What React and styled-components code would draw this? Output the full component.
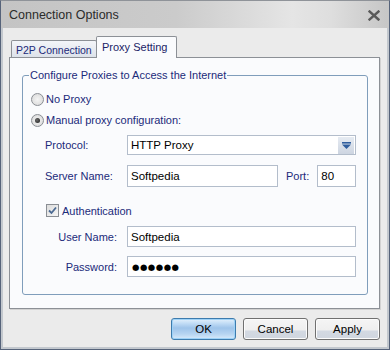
import React from 'react';
import styled, { createGlobalStyle } from 'styled-components';

const Global = createGlobalStyle`
  html, body { margin: 0; padding: 0; background: #ffffff; }
  body { font-family: "Liberation Sans", Arial, sans-serif; font-size: 11px; }
  #root { width: 390px; height: 350px; }
`;

const Window = styled.div`
  width: 390px;
  height: 350px;
  box-sizing: border-box;
  display: flex;
  flex-direction: column;
  border: 1px solid #56637a;
  border-top-color: #8f9399;
  padding: 0 2px 2px 2px;
  background: #c3c8ce;
`;

const TitleBar = styled.div`
  height: 27px;
  margin: 0 -2px;
  padding: 0 9px 0 8px;
  display: flex;
  align-items: center;
  justify-content: space-between;
  background: linear-gradient(90deg, #c4c4c4 0%, #cbcbcb 45%, #e5e5e5 75%, #dedede 85%, #c6c6c6 100%);
`;

const Title = styled.span`
  font-size: 12.5px;
  color: #2b2b2b;
  padding-top: 1px;
`;

const Close = styled.svg`
  width: 12px;
  height: 11px;
  margin-top: 2px;
`;

const Body = styled.div`
  flex: 1;
  display: flex;
  flex-direction: column;
  background: #ebebeb;
  padding: 8px 7px 7px 6px;
`;

const TabStrip = styled.div`
  display: flex;
  align-items: flex-end;
  height: 21px;
  padding-left: 2px;
  position: relative;
  z-index: 1;
`;

const Tab = styled.div`
  box-sizing: border-box;
  width: ${p => (p.$active ? 81 : 86)}px;
  height: ${p => (p.$active ? 22 : 17)}px;
  margin-left: ${p => (p.$active ? -1 : 0)}px;
  margin-bottom: ${p => (p.$active ? -1 : 0)}px;
  border: 1px solid #8c9096;
  border-bottom: none;
  border-radius: 2px 2px 0 0;
  background: ${p => (p.$active ? '#fafbfd' : 'linear-gradient(#f3f5f9, #dde2ea)')};
  color: ${p => (p.$active ? '#1b2366' : '#1b2a7a')};
  font-size: ${p => (p.$active ? 11 : 10.5)}px;
  white-space: nowrap;
  overflow: hidden;
  display: flex;
  align-items: ${p => (p.$active ? 'flex-start' : 'center')};
  padding: ${p => (p.$active ? '4px 0 0 5px' : '1px 0 0 4px')};
`;

const Panel = styled.div`
  box-sizing: border-box;
  width: 371px;
  height: 252px;
  border: 1px solid #8c9096;
  background: #fafbfd;
  box-shadow: 1px 1px 0 #d2d2d2;
  display: flex;
  flex-direction: column;
`;

const Group = styled.fieldset`
  margin: 11px 11px 0 12px;
  padding: 0 0 17px 0;
  border: 1px solid #7f9dbb;
  border-radius: 3px;
  display: flex;
  flex-direction: column;
`;

const Legend = styled.legend`
  margin-left: 6px;
  padding: 0 1px;
  line-height: 13px;
  font-size: 11px;
  color: #1b2a7a;
`;

const Rows = styled.div`
  display: flex;
  flex-direction: column;
  padding-top: 9px;
`;

const Row = styled.div`
  display: flex;
  align-items: center;
  height: ${p => p.$h}px;
  margin-top: ${p => p.$gap}px;
  padding-left: ${p => p.$indent}px;
`;

const Radio = styled.span`
  box-sizing: border-box;
  width: 13px;
  height: 13px;
  border-radius: 50%;
  border: 1px solid #8a8e94;
  background: radial-gradient(circle at 50% 50%, #f4f4f4 0%, #e2e2e2 60%, #d4d4d4 100%);
  display: flex;
  align-items: center;
  justify-content: center;
  &::after {
    content: '';
    width: 5px;
    height: 5px;
    border-radius: 50%;
    background: ${p => (p.$checked ? 'radial-gradient(circle at 40% 40%, #6a6a6a, #1c1c1c)' : 'transparent')};
  }
`;

const Check = styled.span`
  box-sizing: border-box;
  width: 13px;
  height: 13px;
  border: 1px solid #8a8e94;
  background: linear-gradient(135deg, #dcdcdc, #f6f6f6);
  display: flex;
  align-items: center;
  justify-content: center;
`;

const Label = styled.span`
  color: #1b2a7a;
  font-size: 11px;
  margin-left: ${p => p.$ml || 0}px;
  width: ${p => (p.$w ? `${p.$w}px` : 'auto')};
  text-align: ${p => p.$align || 'left'};
  flex-shrink: 0;
`;

const Field = styled.div`
  box-sizing: border-box;
  width: ${p => p.$w}px;
  height: 100%;
  margin-left: ${p => p.$ml || 0}px;
  border: 1px solid #b3bdcb;
  background: #ffffff;
  display: flex;
  align-items: center;
  padding-left: 3px;
  color: #000;
  font-size: 11.5px;
`;

const Select = styled(Field)`
  padding-right: 1px;
  justify-content: space-between;
`;

const DropBtn = styled.div`
  width: 16px;
  height: 17px;
  background: linear-gradient(#e6ebf2, #cdd5e1);
  display: flex;
  align-items: center;
  justify-content: center;
`;

const Dots = styled.span`
  font-size: 8.5px;
  letter-spacing: 0.5px;
  font-family: "DejaVu Sans", sans-serif;
  padding-left: 1px;
`;

const ButtonBar = styled.div`
  display: flex;
  justify-content: flex-end;
  gap: 7px;
  margin-top: 9px;
`;

const Button = styled.button`
  box-sizing: border-box;
  width: 65px;
  height: 22px;
  border-radius: 3px;
  border: 1px solid ${p => (p.$default ? '#3d7bad' : '#707070')};
  background: ${p =>
    p.$default
      ? 'linear-gradient(#e3f0fc 0%, #c4def6 20%, #9ec4ea 45%, #b6d4f1 75%, #d8ebfb 100%)'
      : 'linear-gradient(#f5f5f5 0%, #efefef 55%, #d3d9e2 60%, #d0d6df 100%)'};
  box-shadow: inset 0 0 0 1px ${p => (p.$default ? '#9ed2f7' : '#fcfcfc')};
  font-family: "Liberation Sans", Arial, sans-serif;
  font-size: 11.5px;
  color: #000;
  padding: 0;
`;

export default function App() {
  return (
    <>
      <Global />
      <Window>
        <TitleBar>
          <Title>Connection Options</Title>
          <Close viewBox="0 0 12 11">
            <path d="M1.5 1.5 L10.5 9.5 M10.5 1.5 L1.5 9.5" stroke="#5a5a5a" strokeWidth="2.4" strokeLinecap="square" />
          </Close>
        </TitleBar>
        <Body>
          <TabStrip>
            <Tab>P2P Connection</Tab>
            <Tab $active>Proxy Setting</Tab>
          </TabStrip>
          <Panel>
            <Group>
              <Legend>Configure Proxies to Access the Internet</Legend>
              <Rows>
                <Row $h={16} $gap={0} $indent={8}>
                  <Radio />
                  <Label $ml={2}>No Proxy</Label>
                </Row>
                <Row $h={16} $gap={5} $indent={8}>
                  <Radio $checked />
                  <Label $ml={2}>Manual proxy configuration:</Label>
                </Row>
                <Row $h={20} $gap={7} $indent={22}>
                  <Label $w={82}>Protocol:</Label>
                  <Select $w={229}>
                    HTTP Proxy
                    <DropBtn>
                      <svg width="9" height="7" viewBox="0 0 9 7">
                        <rect x="0" y="0" width="9" height="1.6" fill="#2f5e9e" />
                        <path d="M0 2.6 H9 L4.5 7 Z" fill="#2f5e9e" />
                      </svg>
                    </DropBtn>
                  </Select>
                </Row>
                <Row $h={22} $gap={10} $indent={22}>
                  <Label $w={82}>Server Name:</Label>
                  <Field $w={151}>Softpedia</Field>
                  <Label $ml={8}>Port:</Label>
                  <Field $w={39} $ml={8}>80</Field>
                </Row>
                <Row $h={17} $gap={15} $indent={23}>
                  <Check>
                    <svg width="9" height="9" viewBox="0 0 9 9">
                      <path d="M1 4.5 L3.5 7 L8 1.5" stroke="#4b6a93" strokeWidth="1.8" fill="none" />
                    </svg>
                  </Check>
                  <Label $ml={3}>Authentication</Label>
                </Row>
                <Row $h={21} $gap={7} $indent={22}>
                  <Label $w={72} $align="right">User Name:</Label>
                  <Field $w={229} $ml={10}>Softpedia</Field>
                </Row>
                <Row $h={21} $gap={9} $indent={22}>
                  <Label $w={72} $align="right">Password:</Label>
                  <Field $w={229} $ml={10}><Dots>●●●●●●</Dots></Field>
                </Row>
              </Rows>
            </Group>
          </Panel>
          <ButtonBar>
            <Button $default>OK</Button>
            <Button>Cancel</Button>
            <Button>Apply</Button>
          </ButtonBar>
        </Body>
      </Window>
    </>
  );
}
